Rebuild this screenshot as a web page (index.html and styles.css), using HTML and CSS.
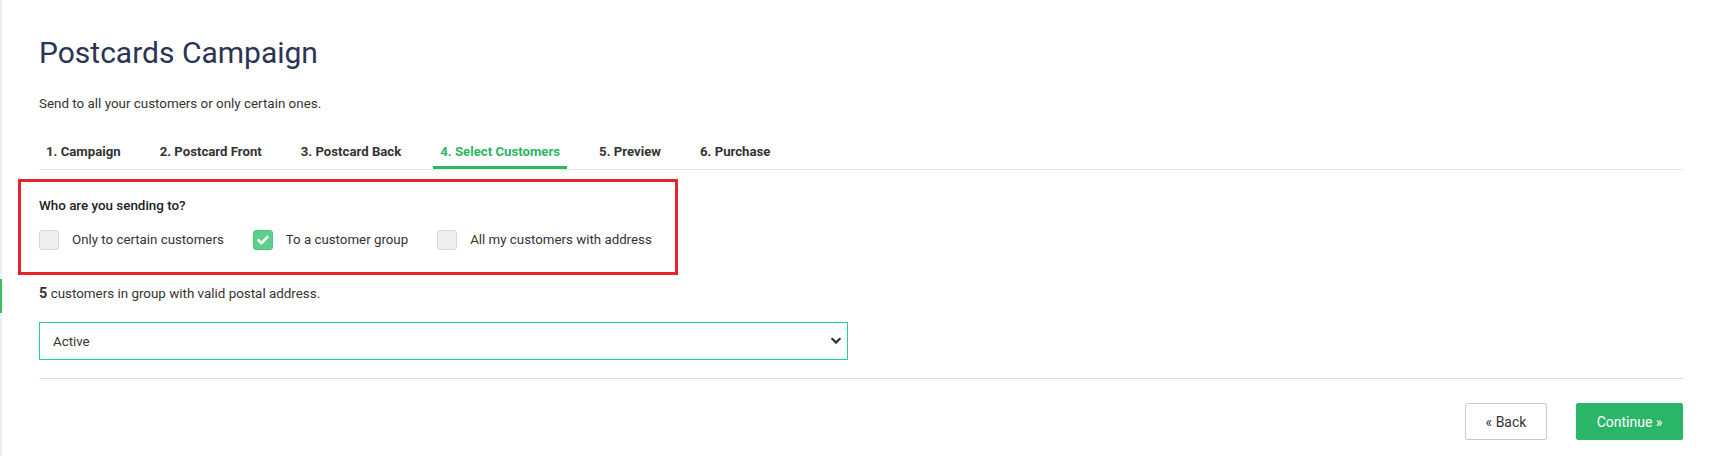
FILE: index.html
```html
<!DOCTYPE html>
<html lang="en">
<head>
<meta charset="utf-8">
<title>Postcards Campaign</title>
<link rel="stylesheet" href="styles.css">
</head>
<body>
<div class="page">
  <aside class="rail"><span class="rail-mark"></span></aside>
  <main class="main">
    <h1 class="title">Postcards Campaign</h1>
    <p class="lead">Send to all your customers or only certain ones.</p>
    <nav class="steps">
      <a class="step">1. Campaign</a>
      <a class="step">2. Postcard Front</a>
      <a class="step">3. Postcard Back</a>
      <a class="step step-active">4. Select Customers</a>
      <a class="step">5. Preview</a>
      <a class="step">6. Purchase</a>
    </nav>
    <section class="audience">
      <h2 class="audience-q">Who are you sending to?</h2>
      <div class="options">
        <label class="opt"><span class="box"></span><span>Only to certain customers</span></label>
        <label class="opt"><span class="box box-on"><svg viewBox="0 0 20 20" width="20" height="20"><path d="M5.5 10.2 L8.6 13.2 L14.5 6.8" fill="none" stroke="#fff" stroke-width="2.6" stroke-linecap="round" stroke-linejoin="round"/></svg></span><span>To a customer group</span></label>
        <label class="opt"><span class="box"></span><span>All my customers with address</span></label>
      </div>
    </section>
    <p class="count"><strong>5</strong> customers in group with valid postal address.</p>
    <div class="select">
      <span>Active</span>
      <svg class="chev" viewBox="0 0 10 8" width="10" height="8"><path d="M1.2 1.8 L5 5.6 L8.8 1.8" fill="none" stroke="#333" stroke-width="2.2" stroke-linecap="round" stroke-linejoin="round"/></svg>
    </div>
    <div class="divider"></div>
    <div class="actions">
      <button class="btn btn-back">« Back</button>
      <button class="btn btn-go">Continue »</button>
    </div>
  </main>
</div>
</body>
</html>
```
FILE: styles.css
```css
html, body {
  margin: 0;
  padding: 0;
  background: #fff;
}
body {
  font-family: Roboto, "Liberation Sans", sans-serif;
  color: #333;
}
.page {
  display: flex;
  min-height: 456px;
}
.rail {
  width: 2px;
  flex: none;
  background: #edf0f5;
  display: flex;
  flex-direction: column;
}
.rail-mark {
  display: block;
  margin-top: 279px;
  height: 34px;
  background: #3cc15a;
}
.main {
  flex: 1;
  padding: 34px 27px 0 37px;
}
.title {
  margin: 0;
  font-size: 30px;
  line-height: 38px;
  font-weight: 400;
  color: #2a3456;
}
.lead {
  margin: 22px 0 0;
  font-size: 13.4px;
  line-height: 20px;
  color: #333;
}
.steps {
  margin-top: 27px;
  display: flex;
  gap: 25px;
  border-bottom: 1px solid #e8e8e8;
}
.step {
  padding: 1px 7px 4px;
  font-size: 13.2px;
  line-height: 20px;
  font-weight: 700;
  color: #333;
  border-bottom: 3px solid transparent;
}
.step-active {
  color: #2db564;
  border-bottom-color: #2db564;
}
.audience {
  margin: 9px 0 0 -21px;
  width: 660px;
  box-sizing: border-box;
  border: 3px solid #e8232b;
  padding: 14px 18px 22px;
}
.audience-q {
  margin: 0;
  font-size: 13.4px;
  line-height: 20px;
  font-weight: 500;
  color: #222;
}
.options {
  display: flex;
  gap: 29px;
  margin-top: 14px;
}
.opt {
  display: flex;
  align-items: center;
  gap: 13px;
  font-size: 13.3px;
  line-height: 20px;
  color: #333;
}
.box {
  width: 20px;
  height: 20px;
  box-sizing: border-box;
  border: 1px solid #dadada;
  background: #eeeeee;
  border-radius: 3px;
  display: flex;
  align-items: center;
  justify-content: center;
}
.box-on {
  background: #5ccf8c;
  border-color: #4fc47f;
}
.box-on svg {
  display: block;
  flex: none;
}
.count {
  margin: 9px 0 0;
  font-size: 13.4px;
  line-height: 20px;
  color: #333;
}
.count strong {
  font-size: 14.5px;
  font-weight: 700;
}
.select {
  margin-top: 18px;
  width: 809px;
  height: 38px;
  box-sizing: border-box;
  border: 1px solid #1fcfa4;
  display: flex;
  align-items: center;
  justify-content: space-between;
  padding: 0 6px 0 13px;
  font-size: 13.3px;
  color: #333;
}
.chev {
  display: block;
}
.divider {
  margin-top: 18px;
  height: 1px;
  background: #dddddd;
}
.actions {
  margin-top: 24px;
  display: flex;
  justify-content: flex-end;
  gap: 29px;
}
.btn {
  height: 37px;
  box-sizing: border-box;
  font-family: Roboto, "Liberation Sans", sans-serif;
  font-size: 14px;
  border-radius: 2px;
  padding: 0;
}
.btn-back {
  width: 82px;
  border: 1px solid #cccccc;
  background: #fff;
  color: #333;
}
.btn-go {
  width: 107px;
  border: 1px solid #2bb566;
  background: #2bb566;
  color: #fff;
}
```
